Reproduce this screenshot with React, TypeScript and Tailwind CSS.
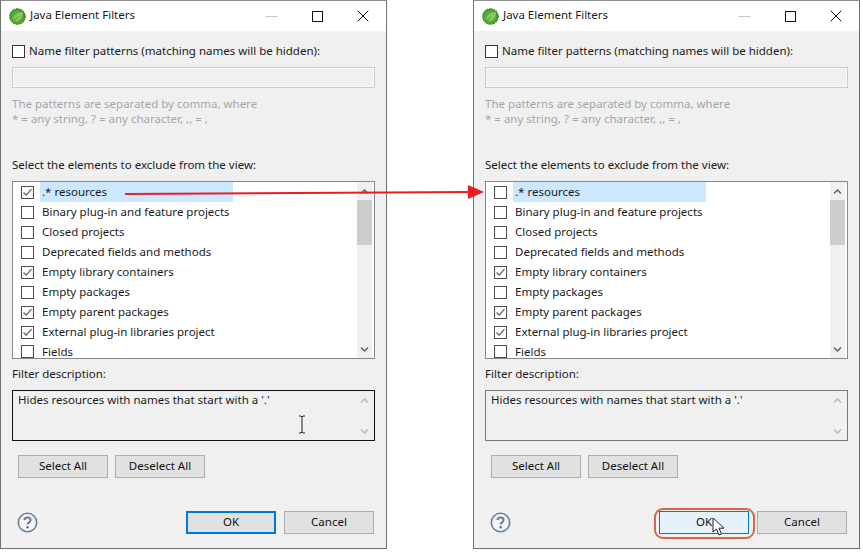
import { Minus, X } from 'lucide-react';

const items = [
  { label: '.* resources' },
  { label: 'Binary plug-in and feature projects' },
  { label: 'Closed projects' },
  { label: 'Deprecated fields and methods' },
  { label: 'Empty library containers', on: true },
  { label: 'Empty packages' },
  { label: 'Empty parent packages', on: true },
  { label: 'External plug-in libraries project', on: true },
];

const Check = ({ on, dark }: { on?: boolean; dark?: boolean }) => (
  <span className={`flex h-[13px] w-[13px] shrink-0 items-center justify-center border bg-white ${dark ? 'border-[#333333]' : 'border-[#4d4d4d]'}`}>
    {on && (
      <svg width="11" height="11" viewBox="0 0 11 11" fill="none">
        <path d="M1.5 5.5 L4.2 8.2 L9.5 2.2" stroke="#5a5a5a" strokeWidth="1.2" />
      </svg>
    )}
  </span>
);

const Chevron = ({ up, color }: { up?: boolean; color: string }) => (
  <svg width="9" height="7" viewBox="0 0 9 7" fill="none">
    <path d={up ? 'M1 5.5 L4.5 2 L8 5.5' : 'M1 1.5 L4.5 5 L8 1.5'} stroke={color} strokeWidth="1.5" />
  </svg>
);

const Logo = () => (
  <svg width="17" height="17" viewBox="0 0 17 17">
    <circle cx="8.5" cy="8.5" r="7.8" fill="#45962a" strokeDasharray="1.5 1" stroke="#3b8f2a" strokeWidth="1.2" />
    <circle cx="8" cy="9" r="6.4" fill="#5ba838" />
    <path d="M4 12.5 C4 7 8 4.5 14 4 C14 10 10.5 13.5 6 13 C8 10.5 9.5 9 11 7.8 C8.5 8.8 6 10.5 4 12.5 Z" fill="#8cc665" />
  </svg>
);

const HelpIcon = () => (
  <svg width="21" height="21" viewBox="0 0 21 21" fill="none">
    <circle cx="10.5" cy="10.5" r="9.2" fill="#f4f6fa" stroke="#6b7f9c" strokeWidth="1.6" />
    <path d="M7.4 8.1 C7.5 6.2 8.9 5.4 10.5 5.4 C12.3 5.4 13.6 6.4 13.6 8 C13.6 10.1 10.6 10.3 10.6 12.6" stroke="#5f7391" strokeWidth="1.9" />
    <circle cx="10.6" cy="15.2" r="1.2" fill="#5f7391" />
  </svg>
);

const Btn = ({ children, cls = '' }: { children: string; cls?: string }) => (
  <div className={`flex h-[23px] w-[90px] items-center justify-center border border-[#adadad] bg-[#e1e1e1] pb-[2px] text-[11.5px] text-[#111111] ${cls}`}>
    {children}
  </div>
);

const ScrollTrack = ({ thumb, color }: { thumb?: boolean; color: string }) => (
  <div className="mr-[2px] flex w-[15px] shrink-0 flex-col bg-[#f0f0f0]">
    <div className="flex h-[18px] shrink-0 items-center justify-center"><Chevron up color={color} /></div>
    {thumb && <div className="h-[45px] bg-[#cdcdcd]" />}
    <div className="flex-1" />
    <div className="flex h-[18px] shrink-0 items-center justify-center"><Chevron color={color} /></div>
  </div>
);

const FilterDialog = ({ first, hovered }: { first?: boolean; hovered?: boolean }) => (
  <div className="flex h-[549px] w-[387px] shrink-0 flex-col border border-[#707070] border-t-[#8c8c8c] bg-[#f0f0f0] text-[11.5px] leading-[15px] text-[#1a1a1a]">
    <div className="flex h-[30px] shrink-0 items-center bg-white">
      <div className="ml-[8px]"><Logo /></div>
      <span className="mb-[4px] ml-[4px] text-[11.5px]">Java Element Filters</span>
      <div className="ml-auto flex items-center">
        <Minus className="mr-[31px] h-[19px] w-[19px] text-[#c4c4c4]" strokeWidth={1.3} />
        <div className="mr-[30px] h-[11px] w-[11px] border border-[#111111]" />
        <X className="mr-[13px] h-[20px] w-[20px] text-[#111111]" strokeWidth={1.2} />
      </div>
    </div>

    <div className="flex flex-1 flex-col px-[11px]">
      <div className="mt-[13px] flex h-[15px] items-center gap-[4px]">
        <Check dark />
        <span className="-translate-y-px">Name filter patterns (matching names will be hidden):</span>
      </div>
      <div className="mt-[8px] h-[21px] w-[363px] border border-[#cbcbcb] bg-[#f0f0f0] shadow-[inset_0_0_0_1px_#f8f8f8]" />
      <div className="mt-[8px] text-[#a6a6a6]">
        <div className="h-[15px]">The patterns are separated by comma, where</div>
        <div className="h-[15px]">* = any string, ? = any character, ,, = ,</div>
      </div>
      <div className="mt-[31px]">Select the elements to exclude from the view:</div>

      <div className="mt-[9px] flex h-[178px] w-[363px] overflow-hidden border border-[#828790] bg-white">
        <div className="flex-1 overflow-hidden">
          {items.map((it, i) => (
            <div key={it.label} className="flex h-[20px] shrink-0 items-center pl-[8px]">
              <Check on={it.on || (first && i === 0)} />
              <span className={`ml-[6px] flex h-[20px] items-center pb-[2px] pl-[2px] ${i === 0 ? 'w-[193px] bg-[#cce8ff]' : ''}`}>{it.label}</span>
            </div>
          ))}
          {/* last row is clipped by the list box, as in the dialog */}
          <div className="flex h-[16px] items-start overflow-hidden pl-[8px] pt-[3px]">
            <Check />
            <span className="ml-[6px] pl-[2px] leading-[13px]">Fields</span>
          </div>
        </div>
        <ScrollTrack thumb color="#606060" />
      </div>

      <div className="mt-[7px]">Filter description:</div>
      <div className={`mt-[9px] flex h-[51px] w-[363px] border ${first ? 'border-[#111111]' : 'border-[#7a7a7a]'}`}>
        <div className="flex-1 pl-[5px] pt-[1px]">Hides resources with names that start with a '.'</div>
        <ScrollTrack color="#b8b8b8" />
      </div>

      <div className="ml-[6px] mt-[14px] flex gap-[7px]">
        <Btn>Select All</Btn>
        <Btn>Deselect All</Btn>
      </div>

      <div className="mt-[33px] flex items-center">
        <div className="ml-[5px]"><HelpIcon /></div>
        <div className="ml-auto mr-[1px] flex gap-[8px]">
          <Btn cls={hovered ? '!border-[#0078d7] !bg-[#e5f1fb]' : '!border-2 !border-[#0078d7]'}>OK</Btn>
          <Btn>Cancel</Btn>
        </div>
      </div>
    </div>
  </div>
);

export default function App() {
  return (
    <div className="relative h-[554px] w-[863px] overflow-hidden bg-white font-['Noto_Sans','Open_Sans',sans-serif]">
      <div className="flex gap-[86px]">
        <FilterDialog first />
        <FilterDialog hovered />
      </div>

      {/* red arrow between the two lists */}
      <svg className="absolute left-0 top-0" width="863" height="554" fill="none">
        <path d="M125 194 L470 192" stroke="#ed1c24" strokeWidth="2" />
        <path d="M468 185 L484 192 L468 199 Z" fill="#ed1c24" />
      </svg>

      {/* highlight round the OK button */}
      <div className="absolute left-[654px] top-[508px] h-[31px] w-[101px] rounded-[9px] border-2 border-[#d9654a]" />

      {/* mouse pointers */}
      <svg className="absolute left-[296px] top-[415px]" width="12" height="19" viewBox="0 0 12 19" fill="none">
        <path d="M3 1 H5 L6 2 L7 1 H9 M6 2 V17 M3 18 H5 L6 17 L7 18 H9" stroke="#222222" strokeWidth="1" />
      </svg>
      <svg className="absolute left-[712px] top-[517px]" width="14" height="20" viewBox="0 0 14 20">
        <path d="M1 1 V15 L4.5 12 L7 18 L9.5 17 L7 11.2 H12 Z" fill="#ffffff" stroke="#222222" strokeWidth="1" />
      </svg>
    </div>
  );
}
